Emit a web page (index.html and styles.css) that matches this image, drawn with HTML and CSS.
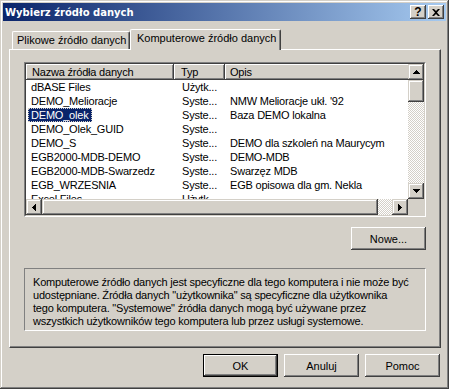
FILE: index.html
```html
<!DOCTYPE html>
<html lang="pl">
<head>
    <meta charset="UTF-8">
    <title>Wybierz źródło danych</title>
    <link rel="stylesheet" href="styles.css">
</head>
<body>
    <div class="window">
        <div class="titlebar">
            <span class="title">Wybierz źródło danych</span>
            <div class="caption-buttons">
                <span class="cap-btn">?</span>
                <span class="cap-btn">
                    <svg width="8" height="7" viewBox="0 0 8 7"><path d="M0 0h2l2 2 2-2h2L5 3.5 8 7H6L4 5 2 7H0l3-3.5z"/></svg>
                </span>
            </div>
        </div>

        <div class="dialog">
            <!-- Tabs -->
            <div class="tabs">
                <div class="tab">Plikowe źródło danych</div>
                <div class="tab active">Komputerowe źródło danych</div>
            </div>

            <div class="panel">
                <div class="list-frame">
                    <div class="listview">
                        <div class="list-main">
                            <div class="list-header">
                                <div class="hcell col-name">Nazwa źródła danych</div>
                                <div class="hcell col-type">Typ</div>
                                <div class="hcell col-desc">Opis</div>
                            </div>
                            <div class="row"><div class="cell col-name"><span>dBASE Files</span></div><div class="cell col-type">Użytk...</div><div class="cell col-desc"></div></div>
                            <div class="row"><div class="cell col-name"><span>DEMO_Melioracje</span></div><div class="cell col-type">Syste...</div><div class="cell col-desc">NMW Melioracje ukł. '92</div></div>
                            <div class="row"><div class="cell col-name"><span class="selected">DEMO_olek</span></div><div class="cell col-type">Syste...</div><div class="cell col-desc">Baza DEMO lokalna</div></div>
                            <div class="row"><div class="cell col-name"><span>DEMO_Olek_GUID</span></div><div class="cell col-type">Syste...</div><div class="cell col-desc"></div></div>
                            <div class="row"><div class="cell col-name"><span>DEMO_S</span></div><div class="cell col-type">Syste...</div><div class="cell col-desc">DEMO dla szkoleń na Maurycym</div></div>
                            <div class="row"><div class="cell col-name"><span>EGB2000-MDB-DEMO</span></div><div class="cell col-type">Syste...</div><div class="cell col-desc">DEMO-MDB</div></div>
                            <div class="row"><div class="cell col-name"><span>EGB2000-MDB-Swarzedz</span></div><div class="cell col-type">Syste...</div><div class="cell col-desc">Swarzęz MDB</div></div>
                            <div class="row"><div class="cell col-name"><span>EGB_WRZESNIA</span></div><div class="cell col-type">Syste...</div><div class="cell col-desc">EGB opisowa dla gm. Nekla</div></div>
                            <div class="row"><div class="cell col-name"><span>Excel Files</span></div><div class="cell col-type">Użytk...</div><div class="cell col-desc"></div></div>
                        </div>

                        <div class="vscroll">
                            <div class="sb-btn"><svg width="7" height="4"><path d="M3 0h1v1h1v1h1v1h1v1H0V3h1V2h1V1h1z"/></svg></div>
                            <div class="sb-thumb v"></div>
                            <div class="sb-track"></div>
                            <div class="sb-btn"><svg width="7" height="4"><path d="M0 0h7v1H6v1H5v1H4v1H3V3H2V2H1V1H0z"/></svg></div>
                        </div>
                        <div class="hscroll">
                            <div class="sb-btn"><svg width="4" height="7"><path d="M3 0h1v7H3V6H2V5H1V4H0V3h1V2h1V1h1z"/></svg></div>
                            <div class="sb-thumb h"></div>
                            <div class="sb-track"></div>
                            <div class="sb-btn"><svg width="4" height="7"><path d="M0 0h1v1h1v1h1v1h1v1H3v1H2v1H1v1H0z"/></svg></div>
                        </div>
                        <div class="corner"></div>
                    </div>
                </div>

                <div class="new-row">
                    <button type="button" class="btn">Nowe...</button>
                </div>

                <div class="info">
                    Komputerowe źródło danych jest specyficzne dla tego komputera i nie może być<br>
                    udostępniane. Źródła danych "użytkownika" są specyficzne dla użytkownika<br>
                    tego komputera. "Systemowe" źródła danych mogą być używane przez<br>
                    wszystkich użytkowników tego komputera lub przez usługi systemowe.
                </div>
            </div>

            <div class="footer">
                <button type="button" class="btn default">OK</button>
                <button type="button" class="btn">Anuluj</button>
                <button type="button" class="btn">Pomoc</button>
            </div>
        </div>
    </div>
</body>
</html>
```

FILE: styles.css
```css
* {
    box-sizing: border-box;
}
body {
    margin: 0;
    font-family: "Liberation Sans", Arial, sans-serif;
    font-size: 11px;
    color: #000;
    background: #d4d0c8;
    overflow: hidden;
}
.window {
    width: 449px;
    height: 389px;
    padding: 3px;
    background: #d4d0c8;
    box-shadow: inset -1px -1px #404040, inset 1px 1px #d4d0c8, inset -2px -2px #808080, inset 2px 2px #fff;
}
.titlebar {
    height: 18px;
    display: flex;
    align-items: center;
    justify-content: space-between;
    padding: 0 2px 0 2px;
    background: linear-gradient(to right, #0a246a, #a6caf0);
}
.title {
    color: #fff;
    font-family: "DejaVu Sans", sans-serif;
    font-weight: bold;
    font-size: 10px;
}
.caption-buttons {
    display: flex;
    gap: 2px;
}
.cap-btn {
    width: 16px;
    height: 14px;
    display: flex;
    align-items: center;
    justify-content: center;
    font-weight: bold;
    font-size: 12px;
    background: #d4d0c8;
    box-shadow: inset -1px -1px #404040, inset 1px 1px #fff, inset -2px -2px #808080, inset 2px 2px #d4d0c8;
}
.dialog {
    padding: 8px 5px 0 6px;
}

/* tabs */
.tabs {
    display: flex;
    align-items: flex-end;
    height: 20px;
    margin-left: 3px;
    position: relative;
    z-index: 1;
}
.tab {
    height: 18px;
    width: 118px;
    padding: 2px 0 0 4px;
    border: 1px solid;
    border-color: #fff #404040 transparent #fff;
    border-bottom: none;
    border-radius: 2px 2px 0 0;
    box-shadow: inset -1px 0 #808080;
    white-space: nowrap;
}
.tab.active {
    height: 21px;
    width: 151px;
    margin-bottom: -1px;
    padding: 2px 0 0 6px;
    background: #d4d0c8;
}

.panel {
    height: 299px;
    border: 1px solid;
    border-color: #fff #404040 #404040 #fff;
    box-shadow: inset -1px -1px #808080;
    padding: 12px 14px 0 14px;
}

/* list view */
.list-frame {
    border: 1px solid;
    border-color: #808080 #fff #fff #808080;
}
.listview {
    height: 153px;
    border: 1px solid;
    border-color: #404040 #d4d0c8 #d4d0c8 #404040;
    background: #fff;
    display: grid;
    grid-template-columns: 1fr 16px;
    grid-template-rows: 1fr 16px;
    letter-spacing: -0.2px;
}
.list-main {
    overflow: hidden;
}
.list-header, .row {
    display: flex;
    white-space: nowrap;
}
.list-header {
    height: 16px;
    line-height: 16px;
}
.hcell {
    flex: none;
    background: #d4d0c8;
    box-shadow: inset -1px -1px #404040, inset 1px 1px #fff, inset -2px -2px #808080;
}
.col-name {
    width: 148px;
    padding-left: 6px;
}
.col-type {
    width: 51px;
    padding-left: 7px;
}
.col-desc {
    width: 200px;
    padding-left: 5px;
}
.row {
    height: 14px;
    line-height: 14px;
}
.cell {
    flex: none;
    overflow: hidden;
}
.cell.col-name {
    padding-left: 2px;
}
.cell.col-type {
    padding-left: 8px;
}
.cell.col-name span {
    padding: 0 3px;
}
.cell.col-name .selected {
    display: inline-block;
    height: 14px;
    background: #0a246a;
    color: #fff;
    outline: 1px dotted #d4d0c8;
    outline-offset: -1px;
}

/* scroll bars */
.vscroll, .hscroll {
    display: flex;
    background: #d4d0c8;
}
.vscroll {
    flex-direction: column;
}
.sb-btn {
    flex: none;
    width: 16px;
    height: 16px;
    display: flex;
    align-items: center;
    justify-content: center;
    background: #d4d0c8;
    box-shadow: inset -1px -1px #404040, inset 1px 1px #d4d0c8, inset -2px -2px #808080, inset 2px 2px #fff;
}
.sb-thumb {
    flex: none;
    background: #d4d0c8;
    box-shadow: inset -1px -1px #404040, inset 1px 1px #d4d0c8, inset -2px -2px #808080, inset 2px 2px #fff;
}
.sb-thumb.v {
    height: 22px;
}
.sb-thumb.h {
    width: 336px;
}
.sb-track {
    flex: 1;
    background: repeating-conic-gradient(#fff 0 25%, #d4d0c8 0 50%) 0 0 / 2px 2px;
}
.corner {
    background: #d4d0c8;
}

.new-row {
    display: flex;
    justify-content: flex-end;
    margin-top: 10px;
}
.btn {
    width: 75px;
    height: 23px;
    padding: 0;
    border: none;
    font-family: inherit;
    font-size: 11px;
    color: #000;
    background: #d4d0c8;
    box-shadow: inset -1px -1px #404040, inset 1px 1px #fff, inset -2px -2px #808080, inset 2px 2px #d4d0c8;
}
.btn.default {
    border: 1px solid #000;
}

.info {
    height: 63px;
    margin-top: 18px;
    padding: 7px 8px 0 8px;
    line-height: 13px;
    white-space: nowrap;
    letter-spacing: -0.2px;
    border: 1px solid;
    border-color: #808080 #fff #fff #808080;
}

.footer {
    display: flex;
    justify-content: flex-end;
    gap: 6px;
    margin-top: 6px;
    padding-right: 1px;
}
```
